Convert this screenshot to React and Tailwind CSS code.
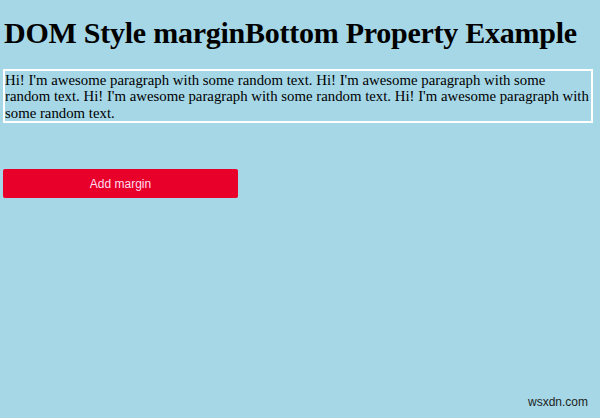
export default function App() {
  return (
    <div className="relative h-[418px] w-[600px] overflow-hidden bg-[#a5d7e6] pl-[3px] pr-[7px] text-black [font-family:'Liberation_Serif',serif]">
      <h1 className="pt-[16px] pl-[1px] text-[30px] font-bold leading-[34px] tracking-[-0.25px]">
        DOM Style marginBottom Property Example
      </h1>
      <p className="mt-[19px] border-2 border-white pt-[1px] text-[14.8px] leading-[16.4px]">
        Hi! I'm awesome paragraph with some random text. Hi! I'm awesome paragraph with some random text. Hi! I'm
        awesome paragraph with some random text. Hi! I'm awesome paragraph with some random text.
      </p>
      <button className="mt-[46px] h-[29px] w-[235px] rounded-[2px] bg-[#e8002a] text-[12px] text-[#fde] [font-family:'Liberation_Sans',sans-serif]">
        Add margin
      </button>
      <span className="absolute right-[12px] bottom-[7px] text-[12px] text-[#222] [font-family:'Liberation_Sans',sans-serif]">
        wsxdn.com
      </span>
    </div>
  );
}
